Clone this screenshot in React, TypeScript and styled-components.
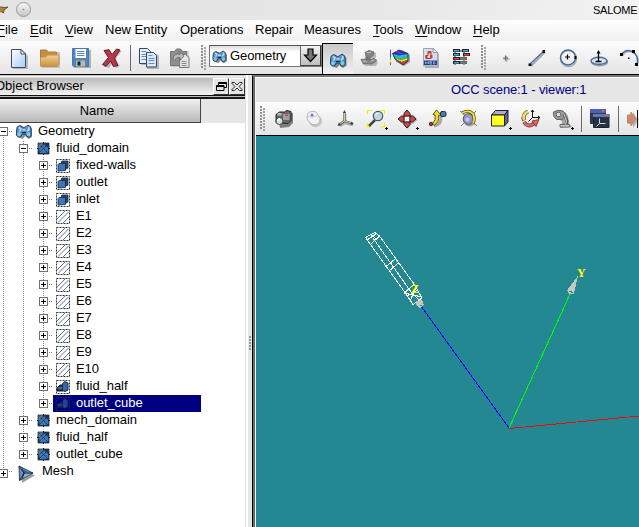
import React from "react";
import styled, { createGlobalStyle, css } from "styled-components";

const Global = createGlobalStyle`
  * { box-sizing: border-box; }
  body { margin: 0; overflow: hidden; }
`;

const Window = styled.div`
  width: 639px;
  height: 527px;
  display: flex;
  flex-direction: column;
  overflow: hidden;
  background: #e6e6e6;
  color: #000;
  font: 13px/17px "Liberation Sans", Arial, sans-serif;
  white-space: pre;
  cursor: default;
`;

const TitleBar = styled.div`
  height: 20px;
  flex: none;
  display: flex;
  align-items: center;
  justify-content: space-between;
  background: linear-gradient(100deg, #e4e4e4 0%, #e6e6e6 55%, #f3f3f3 100%);
`;

const Caption = styled.span`
  font-size: 11px;
  width: 46px;
  letter-spacing: -0.25px;
`;

const MenuBar = styled.div`
  height: 21px;
  flex: none;
  display: flex;
  align-items: center;
  background: linear-gradient(#fff, #f0f0f0);
`;

const MenuItem = styled.span<{ $w: number }>`
  flex: none;
  width: ${(p) => p.$w}px;
  padding-bottom: 2px;
  &:first-child { margin-left: -3px; }
  u { text-underline-offset: 2px; text-decoration-thickness: 1px; }
`;

const Toolbar = styled.div<{ $pad?: number }>`
  height: 33px;
  flex: none;
  display: flex;
  align-items: center;
  overflow: hidden;
  padding-left: ${(p) => p.$pad ?? 0}px;
  background: linear-gradient(#fdfdfd, #e4e4e4);
`;

const Slot = styled.div<{ $pressed?: boolean }>`
  width: 31px;
  height: 33px;
  flex: none;
  display: flex;
  align-items: center;
  justify-content: center;
  ${(p) =>
    p.$pressed &&
    css`
      height: 31px;
      margin-top: 2px;
      background: linear-gradient(#c9c9c9, #f2f2f2);
      border-left: 1px solid #000;
      border-top: 1px solid #000;
    `}
  svg { width: 24px; height: 24px; display: block; flex: none; overflow: visible; }
`;

const Separator = styled.div`
  flex: none;
  width: 1px;
  height: 26px;
  margin: 0 2px 0 3px;
  background: #6a6a6a;
`;

const Grip = styled.div<{ $l?: number; $r?: number }>`
  flex: none;
  width: 5px;
  height: 26px;
  margin: 0 ${(p) => p.$r ?? 4}px 0 ${(p) => p.$l ?? 5}px;
  background:
    repeating-linear-gradient(#8c8c8c 0 2px, transparent 2px 3px) 0 0 / 2px 24px no-repeat,
    repeating-linear-gradient(#a0a0a0 0 2px, transparent 2px 3px) 3px 2px / 2px 24px no-repeat;
`;

const Combo = styled.div`
  flex: none;
  width: 113px;
  height: 22px;
  margin-top: -3px;
  display: flex;
  align-items: center;
  border: 1px solid #777;
  border-top-color: #555;
  background: linear-gradient(#dcdcdc, #fff 6px);
  svg { width: 15px; height: 14px; margin: 1px 3px 0 2px; flex: none; }
  span { flex: 1; margin-top: -2px; letter-spacing: -0.1px; }
`;

const ComboArrow = styled.div`
  width: 21px;
  height: 20px;
  background: linear-gradient(#f4f4f4, #bdbdbd);
  border-left: 1px solid #666;
  border-right: 1px solid #333;
  border-bottom: 1px solid #444;
  && svg { width: 19px; height: 19px; margin: 0; display: block; }
`;

const Workspace = styled.div`
  flex: 1;
  min-height: 0;
  display: flex;
  border-top: 1px solid #000;
`;

const Dock = styled.div`
  width: 246px;
  flex: none;
  display: flex;
  flex-direction: column;
  border-right: 1px solid #e0e0e0;
  background: #fff;
`;

const DockTitle = styled.div`
  height: 21px;
  flex: none;
  display: flex;
  align-items: center;
  padding-top: 1px;
  border-top: 1px solid #c8c8c8;
  border-bottom: 1px solid #111;
  background: linear-gradient(#fff, #bcbcbc 14%, #f4f4f4);
  span { flex: 1; margin-left: -5px; margin-top: -1px; }
`;

const DockButton = styled.div`
  width: 16px;
  height: 17px;
  border: 1px solid #fff;
  border-right-color: #333;
  border-bottom-color: #333;
  background: #e4e4e4;
  svg { width: 14px; height: 15px; display: block; }
`;

const HeaderRow = styled.div`
  height: 27px;
  flex: none;
  display: flex;
  background: #e6e6e6;
  border-top: 1px solid #bbb;
  padding-top: 2px;
  box-shadow: inset 0 2px 0 #161616;
`;

const HeaderCell = styled.div`
  width: 201px;
  display: flex;
  align-items: center;
  justify-content: center;
  padding: 1px 6px 1px 0;
  border-right: 1px solid #444;
  border-bottom: 1px solid #444;
  background: linear-gradient(#f1f1f1, #b9b9b9);
`;

const Tree = styled.div`
  flex: 1;
  overflow: hidden;
`;

const Row = styled.div<{ $tall?: boolean }>`
  height: ${(p) => (p.$tall ? 21 : 17)}px;
  display: flex;
  margin-left: -7px;
`;

const dots = "repeating-linear-gradient(#858585 0 1px, transparent 1px 2px)";
const hdots = "repeating-linear-gradient(90deg, #858585 0 1px, transparent 1px 2px)";

const Guide = styled.div<{ $line: "full" | "half" | "below"; $odd: boolean; $branch?: boolean }>`
  width: 20px;
  flex: none;
  display: flex;
  align-items: center;
  padding-left: 6px;
  background-repeat: no-repeat;
  background-image: ${dots}, ${(p) => (p.$branch ? hdots : "none")};
  background-position: 10px ${(p) => (p.$line === "below" ? 8 : p.$odd ? 1 : 0)}px, 10px 8px;
  background-size: 1px ${(p) => (p.$line === "half" ? "9px" : "17px")}, 10px 1px;
`;

const Expander = styled.div<{ $open?: boolean }>`
  width: 9px;
  height: 9px;
  border: 1px solid #707070;
  background:
    linear-gradient(#000, #000) center / 5px 1px no-repeat,
    linear-gradient(#000, #000) center / 1px ${(p) => (p.$open ? 1 : 5)}px no-repeat,
    #fff;
`;

const Item = styled.div<{ $selected?: boolean; $pad: number; $gap: number; $lift: number }>`
  display: flex;
  align-items: center;
  padding-left: ${(p) => p.$pad}px;
  gap: ${(p) => p.$gap}px;
  letter-spacing: -0.06px;
  ${(p) => p.$selected && css`width: 148px; background: #000080; color: #fff;`}
  svg { flex: none; display: block; }
  span { margin-top: -${(p) => p.$lift}px; }
`;

const Splitter = styled.div`
  width: 6px;
  flex: none;
  display: flex;
  align-items: center;
  justify-content: flex-end;
  border-left: 2px solid #fff;
  padding: 85px 1px 0 0;
  background: #e6e6e6;
  &::before {
    content: "";
    width: 2px;
    height: 15px;
    background: repeating-linear-gradient(#999 0 2px, transparent 2px 3px);
  }
`;

const Viewer = styled.div`
  flex: 1;
  min-width: 0;
  display: flex;
  flex-direction: column;
  border-top: 2px solid #777;
  border-left: 1px solid #000;
  padding-left: 3px;
  background: linear-gradient(90deg, #6a6a6a 2px, #f4f4f4 2px);
`;

const ViewerTitle = styled.div`
  height: 25px;
  flex: none;
  border-top: 1px solid #fafafa;
  background: #e6e6e6;
  color: #000080;
  padding: 3px 0 0 195px;
  letter-spacing: -0.12px;
`;

const Scene = styled.div`
  flex: 1;
  border-top: 1px solid #000;
  background: #248892;
  overflow: hidden;
  svg { display: block; }
  text { font: bold 12px "Liberation Serif", serif; fill: #ff0; }
`;

const Ico = ({ children, s = 24 }: { children: React.ReactNode; s?: number }) => (
  <svg width={s} height={s} viewBox={`0 0 ${s} ${s}`}>{children}</svg>
);

const DocIcon = () => (
  <Ico>
    <path d="M6 5h10l5 5v13H6z" fill="#999" opacity=".6" />
    <path d="M4.500 3.500h9.500L18.500 8v13.500h-14z" fill="url(#paper)" stroke="#3c4a66" />
    <path d="M14 3.500V8h4.500z" fill="#fff" stroke="#3c4a66" />
  </Ico>
);

const FolderIcon = () => (
  <Ico>
    <path d="M4 6h18v16H4z" fill="#999" opacity=".5" />
    <path d="M2.500 4h6l2 2h8v14h-16z" fill="#c8903e" stroke="#a87b3c" />
    <path d="M2.500 20V11h5l2-2H21v9l-2 2.500z" fill="url(#gold)" stroke="#c3914c" />
  </Ico>
);

const FloppyIcon = () => (
  <Ico>
    <path d="M5 4h17v18H5z" fill="#888" opacity=".6" />
    <path d="M3.500 2.500h16v18h-15l-1-1z" fill="#5183bd" stroke="#4a78ab" />
    <path d="M6.500 3h10.500v9H6.500z" fill="#fff" />
    <path d="M8 5.500h7.500M8 7.500h7.500M8 9.500h7.500" stroke="#568ac4" />
    <path d="M7 14.500h9v6H7z" fill="#b7bdae" />
    <path d="M8.500 15.500h3v4h-3z" fill="#222" />
  </Ico>
);

const DeleteIcon = () => (
  <Ico>
    <path d="M7 6 L18 21 M20 4 L7 21" stroke="#888" strokeWidth="4" opacity=".5" />
    <path d="M4 4.500l5-.8 3 5 4.500-5.700 3.500 1-5.500 8 3.500 7.500-4.500 1-3-5.500-4.500 5.500-3.500-2 6-7z" fill="#b93746" stroke="#5a1c26" />
  </Ico>
);

const CopyIcon = () => (
  <Ico>
    <path d="M4 4h9v4h7l2 2v13H10v-4H4z" fill="#888" opacity=".5" />
    <path d="M2.500 2.500h8l3 3v12h-11z" fill="#e7effb" stroke="#334766" />
    <path d="M4.500 5.500h5M4.500 8.500h6M4.500 10.500h5M4.500 13.500h5" stroke="#6c8cc0" />
    <path d="M9.500 6.500h7l3 3v11.500h-10z" fill="#dce8fa" stroke="#334766" />
    <path d="M11.500 9.500h4M11.500 12.500h6M11.500 14.500h6M11.500 17.500h6" stroke="#6c8cc0" />
  </Ico>
);

const PasteIcon = () => (
  <Ico>
    <path d="M3 5h18v16H3z" fill="#aaa" opacity=".5" />
    <path d="M2.500 5.500h4l2-2.500h4l2 2.500h4v14h-16z" fill="#8f8f8f" stroke="#747474" />
    <path d="M11.500 8.500h6l3.500 3v10h-9.500z" fill="#e5e5e5" stroke="#777" />
    <path d="M5 13.500q1-7 7-5V5.500l4 4.500-4 4.500v-3q-4-1-5 3z" fill="#bdbdbd" stroke="#666" strokeWidth=".8" />
    <path d="M13.500 15.500h5M13.500 17.500h5M13.500 19.500h5" stroke="#888" />
  </Ico>
);

const GeometryShape = () => (
  <>
    <path d="M2 4l3-2.500 4 2.500 4.500-2.500L16.500 5v8l-4 2-3-3-3 3-4.500-2z" fill="#333" opacity=".55" />
    <path d="M1 3.500Q3.500 0 6 3q1.500 1 3.500 0 2.500-3.500 5 0l.7 3.500v5q-1.700 2.500-4 1.500L9.500 10H6.500L4.500 13q-2.500.5-4-1.500V7z" fill="#5b91c8" stroke="#24384f" strokeWidth=".9" />
    <path d="M3 3.500l2 1.500-1.500 2.500M12.500 3l.5 2.500-2 1.500M6.500 6h3" fill="none" stroke="#b9dcf8" strokeWidth="1.600" />
    <ellipse cx="3" cy="10.300" rx="1.800" ry="2" fill="#62d6ea" />
    <ellipse cx="12.500" cy="10.300" rx="1.800" ry="2" fill="#62d6ea" />
    <path d="M6 8.500h4" stroke="#1e3048" strokeWidth="1.200" />
  </>
);
const GeometrySmall = () => <svg width="16" height="16" viewBox="0 0 16 16"><GeometryShape /></svg>;
const GeometryIcon = () => <Ico><g transform="translate(4 6)"><GeometryShape /></g></Ico>;

const GrayMeshIcon = () => (
  <Ico>
    <path d="M5 18l4-3-1-6 5-3 6 1v4l-3 3 5 2-2 4H9z" fill="#888" opacity=".55" />
    <path d="M8 6.500l4-2 5 1.500-.5 3-3 2.500-4-.5z" fill="#858585" stroke="#666" strokeWidth=".8" />
    <path d="M8.500 11h5v3h-5z" fill="#777" />
    <path d="M4 13.500l5-.5 3 1.500 5-2 3 2-5 3.500-9-.5z" fill="#8a8a8a" stroke="#666" strokeWidth=".8" />
    <path d="M10 6.500h4M5.500 15l4 .5M14 15l3-1" stroke="#c4c4c4" />
  </Ico>
);

const SpectrumIcon = () => (
  <Ico>
    <path d="M6 8l8-4 8 5v7l-6 4-8-4z" fill="#555" opacity=".5" />
    <path d="M4.500 7.500L11 4l9 3.500V15l-5 4-8-6z" fill="#2733c0" />
    <path d="M5 8l6 1.500L20 8v2.500l-8 2L6 10z" fill="#21bfe0" />
    <path d="M6 10l6 2.500 8-2V12l-7.500 2.200L7 12z" fill="#35cc48" />
    <path d="M7 12l5.500 2.200L20 12v1.700L13.500 16 9 14z" fill="#f1e02c" />
    <path d="M9 14l4.500 2L20 13.700V15l-5 4z" fill="#cf4428" />
    <path d="M4.500 7.500L11 4l9 3.500V15l-5 4-8-6z" fill="none" stroke="#223" strokeWidth=".8" />
    <path d="M8 5.500l7 2.500" stroke="#8b3bd0" />
    <path d="M2.500 3.500v4" stroke="#e222a0" /><path d="M2.500 7v4" stroke="#33f" />
    <path d="M2.500 11v3" stroke="#2d4" /><path d="M2.500 14v3" stroke="#ee3" /><path d="M2.500 16.500v2.500" stroke="#e22" />
  </Ico>
);

const MedIcon = () => (
  <Ico>
    <path d="M6 4h10l4 4v14H6z" fill="#888" opacity=".6" />
    <path d="M4.500 2.500H14l4.500 4v13.500h-14z" fill="#d3deea" stroke="#98a5b8" />
    <path d="M14 2.500v4h4.500z" fill="#fff" stroke="#99a" />
    <path d="M9 5.500h3v7H7v-3h2z" fill="none" stroke="#a33" />
    <path d="M9 5h3v2.500H9zM6.500 9h2v3h-2zM11 9h2.500v3H11z" fill="#d33b2e" />
    <path d="M5 14.500h13v4.500H5z" fill="#223f83" />
    <path d="M6.500 18v-2.500l1.500 2 1.500-2V18M13 15.500h-2V18h2M11 16.700h2M14.500 15.500V18h1l1-1.200-1-1.300z" stroke="#a9c7f4" strokeWidth=".7" fill="none" />
  </Ico>
);

const BlocksIcon = () => (
  <Ico>
    <path d="M5 5v14M5 5h9M14 5v14" stroke="#777" strokeWidth="1.500" />
    {[[3, 3, "#39aee6"], [3, 7, "#39aee6"], [3, 11, "#e83e4b"], [3, 15, "#39aee6"], [12, 3, "#39aee6"], [13, 7, "#e83e4b"], [10, 11, "#777"], [10, 15, "#777"]].map(([x, y, c], i) => (
      <g key={i}>
        <rect x={Number(x)} y={Number(y)} width="7" height="3" fill={i > 5 ? "#666" : "#222"} />
        <rect x={Number(x) + 1} y={Number(y) + 1} width="5" height="1.500" fill={String(c)} />
      </g>
    ))}
  </Ico>
);

const PointIcon = () => (
  <Ico>
    <path d="M12.500 10v6M9.500 13h6" stroke="#aaa" strokeWidth="1.500" />
    <path d="M11.500 9.500v5M9 12h5" stroke="#54708f" />
  </Ico>
);

const LineIcon = () => (
  <Ico>
    <path d="M6 20L20 6" stroke="#aaa" strokeWidth="2" />
    <path d="M5 18L19 5" stroke="#3f6c9e" strokeWidth="1.200" />
    <path d="M3.500 17.500h3v2.500h-3zM17.500 4h2.500v3h-2.500z" fill="#111" />
  </Ico>
);

const CircleIcon = () => (
  <Ico>
    <circle cx="12.500" cy="12.500" r="8" fill="none" stroke="#aaa" strokeWidth="1.500" />
    <circle cx="12" cy="11.500" r="7.500" fill="none" stroke="#3f6c9e" strokeWidth="1.400" />
    <path d="M11.500 8.500v5M9 11h5" stroke="#000" strokeWidth="1.200" />
    <path d="M18.500 10h2v3h-2z" />
  </Ico>
);

const ExtrudeIcon = () => (
  <Ico>
    <ellipse cx="12.500" cy="16" rx="8" ry="3.700" fill="none" stroke="#999" strokeWidth="1.500" />
    <ellipse cx="12" cy="14.800" rx="8" ry="3.500" fill="#dce2e8" stroke="#3f6c9e" strokeWidth="1.400" />
    <path d="M11.500 15V6M8.500 15.500h6" stroke="#000" strokeWidth="1.300" />
    <path d="M9.500 7.500l2-3.500 2 3.500z" />
  </Ico>
);

const ArcIcon = () => (
  <Ico>
    <path d="M4 10q5-7 12-3 6 5 3 12" stroke="#aaa" fill="none" strokeWidth="1.500" />
    <path d="M3 9q5-7 12-3 6 4 4 12" stroke="#3f6c9e" fill="none" strokeWidth="1.500" />
    <path d="M2 7h3v3H2zM14 4h3v3h-3zM17 17h3v3h-3z" />
    <path d="M10 11.500h1.500V13H10z" />
  </Ico>
);

const CameraIcon = () => (
  <Ico>
    <path d="M6 9l6-4 9 1v10l-4 4-9 1z" fill="#333" opacity=".6" />
    <path d="M4 7.500l3.500-2.500h5l2-1.500 4.500 1v9l-3 3-12-1z" fill="#64686a" stroke="#222" />
    <path d="M11 7h6.500v6H11z" fill="#9ba1a3" /><path d="M13 7.500h3V9h-3z" fill="#d63e35" />
    <path d="M5.500 6h4v2.500h-4z" fill="#b8bcbe" />
    <circle cx="7.500" cy="14" r="3.500" fill="#cfdfe4" stroke="#444" />
    <path d="M6 14a2 2 0 0 1 2-2" stroke="#fff" strokeWidth="1.500" fill="none" />
  </Ico>
);

const MouseIcon = () => (
  <Ico>
    <ellipse cx="12.500" cy="14" rx="6.500" ry="6" fill="#999" opacity=".5" />
    <path d="M4 9q.5-4.500 5.500-4.500 4-.5 5.500 3.500 3.500 3.500 1.500 7.500-2.500 3-7 2-5.500-2.500-5.500-8.500z" fill="#f2f2f2" stroke="#b5b5b5" />
    <path d="M4.500 9.500q5 1.500 9.500-1" stroke="#ccc" fill="none" />
    <circle cx="9" cy="8" r="1.500" fill="#7178c0" />
  </Ico>
);

const AxesIcon = () => (
  <Ico>
    <path d="M11 7v9l8 2M11 16l-5 3" stroke="#888" strokeWidth="2.500" fill="none" opacity=".6" />
    <path d="M10.500 5v9l8 2.500M10.500 14L5 18" stroke="#5d5d4e" strokeWidth="2.200" fill="none" />
    <path d="M10.500 6v8l7 2M10.500 14L6 17" stroke="#cfcfac" strokeWidth="1" fill="none" />
    <path d="M9 6l1.500-3L12 6zM17 14.500l3 2.500-3.500 1zM5 15.500L3.500 19l3.500-1z" fill="#44443a" />
  </Ico>
);

const MenuMark = () => <path d="M20 21.500h3M21.500 20v3" stroke="#000" />;

const ZoomIcon = () => (
  <Ico>
    <path d="M2.500 7V3.500h4M15.500 3.500h4V7M2.500 16v4h4M15.500 20h4v-4" stroke="#f7ed00" strokeWidth="1.200" fill="none" />
    <path d="M10 13l-6 6" stroke="#444" strokeWidth="2.500" />
    <circle cx="13" cy="9" r="4.700" fill="#b7dae2" stroke="#555" strokeWidth="1.200" />
    <path d="M10.500 8q1-2 3-2" stroke="#fff" fill="none" />
    <MenuMark />
  </Ico>
);

const PanIcon = () => (
  <Ico>
    <path d="M12 5l3 3h3l4 5-4 3-3 2-3 4-4-4-4-3z" fill="#777" opacity=".4" />
    <g fill="#c84a50" stroke="#34191b">
      <path d="M11 3l3 3.500V9H8V6.500zM11 21l3-3.500V15H8v2.500zM2 12l3.500-3H8v6H5.500zM20 12l-3.500-3H14v6h2.500z" />
    </g>
    <path d="M9 10h4v4H9z" fill="#f4f4f4" />
    <MenuMark />
  </Ico>
);

const PanGlobalIcon = () => (
  <Ico>
    <path d="M7 19q8-1 7-10" stroke="#555" strokeWidth="3" fill="none" opacity=".45" />
    <path d="M6 7.500L9.500 3l4.500 5-2.500.5q1.500 6-4.500 10L5.500 17q4-4 2.500-9z" fill="#f0db2a" stroke="#5b5314" />
    <rect x="13.500" y="4.500" width="5.500" height="5" rx="1.500" fill="#4c79af" stroke="#234" />
    <circle cx="4" cy="17" r="1.700" fill="#c53232" stroke="#422" />
  </Ico>
);

const RotatePointIcon = () => (
  <Ico>
    <path d="M2 4l17 15M18 4L3 19" stroke="#777" strokeWidth="1" />
    <circle cx="11.500" cy="13.500" r="6" fill="#555" opacity=".5" />
    <circle cx="10.500" cy="12" r="5.300" fill="#9496d0" stroke="#556" />
    <circle cx="9.500" cy="12.500" r="2" fill="#c9caf2" />
    <path d="M4 6q8-4 11.500 2 1.500 4-.5 8" stroke="#59500e" strokeWidth="3.200" fill="none" />
    <path d="M4 6q8-4 11.500 2 1.500 4-.5 8" stroke="#f3e22f" strokeWidth="1.800" fill="none" />
  </Ico>
);

const CubeIcon = () => (
  <Ico>
    <path d="M2.500 8l4-4.500H19L15.500 8z" fill="#aaaad5" stroke="#222" />
    <path d="M15.500 8L19 3.500V15l-3.500 4z" fill="#66668d" stroke="#222" />
    <path d="M2.500 8h13v11h-13z" fill="#ffff22" stroke="#222" />
    <MenuMark />
  </Ico>
);

const RotationIcon = () => (
  <Ico>
    <path d="M8 4.500q-6 3-4 9" stroke="#5c5310" strokeWidth="4" fill="none" />
    <path d="M8 4.500q-6 3-4 8.500" stroke="#eadb78" strokeWidth="2.600" fill="none" />
    <path d="M4 15q4 6 10 1.500" stroke="#591f1f" strokeWidth="4" fill="none" />
    <path d="M4 15q4 6 10 1.500" stroke="#df6567" strokeWidth="2.800" fill="none" />
    <path d="M12 14l7-1.500-3 7z" fill="#df6567" stroke="#591f1f" strokeWidth=".7" />
    <path d="M12.500 10.500V3M12.500 10.500h7M12.500 10.500l-4 4M11 5l1.500-2L14 5M18 9l2 1.500-2 1.500" stroke="#111" fill="none" />
  </Ico>
);

const ResetIcon = () => (
  <Ico>
    <path d="M5 5h9l3 4 1 7 3 4-11 1 1-7-5-2z" fill="#777" opacity=".6" />
    <path d="M2.500 5q4-3 9.500-1l2.500 3-3 5.500H6Q1.500 10 2.500 5z" fill="#999" stroke="#666" />
    <circle cx="7.500" cy="7.500" r="2.300" fill="#ddd" stroke="#666" />
    <path d="M13 7l3 7-1 4-6 1" stroke="#555" strokeWidth="3" fill="none" />
    <path d="M9 17.500h9l1 2.500H9z" fill="#ccc" stroke="#555" strokeWidth=".8" />
    <path d="M13 7l2.500 7-1 3.500" stroke="#ddd" fill="none" />
    <MenuMark />
  </Ico>
);

const WindowsIcon = () => (
  <Ico>
    <path d="M2.500 2.500h15v14h-15z" fill="#333b50" stroke="#222c50" />
    <path d="M2 2h16v4H2z" fill="#4864b3" /><path d="M14 3h2v2h-2z" fill="#e45b67" />
    <path d="M5.500 7.500h15.500v13H5.500z" fill="#29333f" stroke="#1c2434" />
    <path d="M5 7h16.500v3H5z" fill="#5f78be" /><path d="M18 7.500h2v2h-2z" fill="#e45b67" />
    <path d="M11.500 11.500v5h6M11.500 16.500l-3 3" stroke="#b8dfed" fill="none" />
  </Ico>
);

const ClipIcon = () => (
  <Ico>
    <path d="M4 8h4V5l5 8-5 8v-4H4z" fill="#777" opacity=".5" />
    <path d="M2.500 8h3.500V5l4.500 7-4.500 7v-3H2.500z" fill="#d5866f" stroke="#b98672" />
    <path d="M12.500 3v18" stroke="#111" />
    <path d="M13.500 12h4" stroke="#ef9856" />
  </Ico>
);

const BoxIcon = () => (
  <svg width="13" height="13" viewBox="0 0 13 13">
    <path d="M1 1h11v11H1z" fill="#1d3853" />
    <path d="M1 1h6L1 8z" fill="#5d7c9c" />
    <path d="M2 7l5-4.500L11.500 6v4L7 11.500 3 11z" fill="#3b76b8" />
    <path d="M2.500 2.500l8 8M10.500 2.500l-8 8" stroke="#132436" strokeWidth=".9" strokeDasharray="1.400 .8" />
    <path d="M1 1h11v11H1z" fill="none" stroke="#1a2c3f" strokeWidth=".8" />
    <path d="M6.500 0v1.500M6.500 11.500V13M0 6.500h1.500M11.500 6.500H13" stroke="#111" />
  </svg>
);

const Frame = () => <rect x=".5" y=".5" width="13" height="13" fill="none" stroke="#333" strokeDasharray="2 1" />;

const FaceIcon = () => (
  <svg width="14" height="14" viewBox="0 0 14 14">
    <Frame />
    <path d="M5 3l1-1h6v7l-2 1z" fill="#234a73" stroke="#112539" strokeWidth=".8" />
    <path d="M2 5.500l1-1h6.500v7L3 12H2z" fill="#3d77b8" stroke="#112539" strokeWidth=".8" />
  </svg>
);

const EdgeIcon = () => (
  <svg width="14" height="14" viewBox="0 0 14 14">
    <Frame />
    <path d="M1 9L9 1M2 12.500L12.500 2M7 13l6-6" stroke="#45688f" strokeWidth=".9" />
  </svg>
);

const SolidIcon = ({ dim }: { dim?: boolean }) => (
  <svg width="14" height="14" viewBox="0 0 14 14" opacity={dim ? 0.65 : 1}>
    <Frame />
    <path d="M1 8l3-3h3v6H1z" fill="#1e3c5c" stroke="#0d1826" />
    <path d="M6.500 4l2-2.500L12 3v7l-3 1.500-2.500-1z" fill="#346aa6" stroke="#132a44" />
    <path d="M1.500 8h5" stroke="#5f86ae" />
  </svg>
);

const MeshIcon = () => (
  <svg width="17" height="18" viewBox="0 0 17 18">
    <path d="M3 3l14 7.500L4 18z" fill="#777" opacity=".7" />
    <path d="M1 1l14 7L1.500 15.500z" fill="#6b93c0" stroke="#162334" strokeWidth=".8" />
    <path d="M1 1l5 7-4.500 7.500M6 8h9M4 3.500l2 4.500-1.500 5" stroke="#162334" fill="none" strokeWidth=".9" />
    <path d="M4 4l7 3.500H7z" fill="#3c5f88" />
    <path d="M7 9h6l-8 4z" fill="#8fb3dc" />
  </svg>
);

type Kind = "geometry" | "box" | "face" | "edge" | "solid" | "mesh";
interface Node { label: string; level: number; kind: Kind; open?: boolean; selected?: boolean; last?: boolean }

const icons: Record<Kind, React.FC> = {
  geometry: GeometrySmall, box: BoxIcon, face: FaceIcon, edge: EdgeIcon, solid: SolidIcon, mesh: MeshIcon,
};

const nodes: Node[] = [
  { label: "Geometry", level: 0, kind: "geometry", open: true },
  { label: "fluid_domain", level: 1, kind: "box", open: true },
  ...["fixed-walls", "outlet", "inlet"].map((label): Node => ({ label, level: 2, kind: "face" })),
  ...Array.from({ length: 10 }, (_, i): Node => ({ label: `E${i + 1}`, level: 2, kind: "edge" })),
  { label: "fluid_half", level: 2, kind: "solid" },
  { label: "outlet_cube", level: 2, kind: "solid", selected: true, last: true },
  { label: "mech_domain", level: 1, kind: "box" },
  { label: "fluid_half", level: 1, kind: "box" },
  { label: "outlet_cube", level: 1, kind: "box", last: true },
  { label: "Mesh", level: 0, kind: "mesh", last: true },
];

const itemPad = [3, 4, 3];

const TreeRow = ({ node, index }: { node: Node; index: number }) => {
  const Icon = icons[node.kind];
  const mesh = node.kind === "mesh";
  return (
    <Row $tall={mesh}>
      {Array.from({ length: node.level + 1 }, (_, l) => {
        const own = l === node.level;
        const line = own ? (node.last ? "half" : index === 0 ? "below" : "full") : "full";
        return (
          <Guide key={l} $line={line} $odd={index % 2 === 1} $branch={own}>
            {own && <Expander $open={node.open} />}
          </Guide>
        );
      })}
      <Item $selected={node.selected} $pad={mesh ? 5 : itemPad[node.level]} $gap={mesh ? 7 : 6} $lift={mesh ? 6 : 2}>
        {node.kind === "solid" ? <SolidIcon dim={node.selected} /> : <Icon />}
        <span>{node.label}</span>
      </Item>
    </Row>
  );
};

const menus: [string, number, boolean][] = [
  ["File", 33, true], ["Edit", 35, true], ["View", 40, true], ["New Entity", 75, false], ["Operations", 75, false],
  ["Repair", 49, false], ["Measures", 69, false], ["Tools", 42, true], ["Window", 58, true], ["Help", 40, true],
];

const Tools = ({ items }: { items: React.FC[] }) => (
  <>{items.map((Icon, i) => <Slot key={i}><Icon /></Slot>)}</>
);

export default function App() {
  return (
    <Window>
      <Global />
      <TitleBar>
        <svg width="36" height="20" viewBox="0 0 36 20">
          <path d="M0 7l5 .5L8 7 4 10l-.5 3L1 11.500l-1 1" fill="#ad842f" stroke="#6d5526" />
          <circle cx="23.500" cy="9.500" r="7" fill="url(#knob)" stroke="#999" />
          <circle cx="23.500" cy="9.500" r=".8" fill="#777" />
          <defs>
            <linearGradient id="knob" x2="0" y2="1"><stop stopColor="#fafafa" /><stop offset="1" stopColor="#c2c2c2" /></linearGradient>
            <linearGradient id="paper" x2="1" y2="1"><stop stopColor="#fff" /><stop offset="1" stopColor="#a9cbfa" /></linearGradient>
            <linearGradient id="gold" x2="0" y2="1"><stop stopColor="#f4d193" /><stop offset="1" stopColor="#cb903d" /></linearGradient>
          </defs>
        </svg>
        <Caption>SALOME</Caption>
      </TitleBar>
      <MenuBar>
        {menus.map(([name, w, key]) => (
          <MenuItem key={name} $w={w}>{key ? <><u>{name[0]}</u>{name.slice(1)}</> : name}</MenuItem>
        ))}
      </MenuBar>
      <Toolbar $pad={3}>
        <Tools items={[DocIcon, FolderIcon, FloppyIcon, DeleteIcon]} />
        <Separator />
        <Tools items={[CopyIcon, PasteIcon]} />
        <Grip $l={6} $r={3} />
        <Combo>
          <GeometrySmall />
          <span>Geometry</span>
          <ComboArrow>
            <svg viewBox="0 0 19 19"><path d="M7 3h5v6h3.500l-6 6.500-6-6.500H7z" fill="#777" stroke="#000" strokeWidth="1.200" /></svg>
          </ComboArrow>
        </Combo>
        <Slot $pressed><GeometryIcon /></Slot>
        <Tools items={[GrayMeshIcon, SpectrumIcon, MedIcon, BlocksIcon]} />
        <Grip $l={4} $r={4} />
        <Tools items={[PointIcon, LineIcon, CircleIcon, ExtrudeIcon, ArcIcon]} />
      </Toolbar>
      <Workspace>
        <Dock>
          <DockTitle>
            <span>Object Browser</span>
            <DockButton>
              <svg viewBox="0 0 14 15"><path d="M4.500 6V3.500h8v5H10M4.500 4.500h8M2.500 6.500H10v5H2.500zM2.500 7.500H10" fill="none" stroke="#000" /></svg>
            </DockButton>
            <DockButton>
              <svg viewBox="0 0 14 15"><path d="M2 3.500h2.500L7 6l2.500-2.500H12v1L9 7.500l3 3v1H9.500L7 9l-2.500 2.500H2v-1l3-3-3-3z" fill="#eee" stroke="#111" strokeWidth=".9" /></svg>
            </DockButton>
          </DockTitle>
          <HeaderRow><HeaderCell>Name</HeaderCell></HeaderRow>
          <Tree>{nodes.map((n, i) => <TreeRow key={i} node={n} index={i} />)}</Tree>
        </Dock>
        <Splitter />
        <Viewer>
          <ViewerTitle>OCC scene:1 - viewer:1</ViewerTitle>
          <Toolbar $pad={0}>
            <Grip $l={4} $r={3} />
            <Tools items={[CameraIcon, MouseIcon, AxesIcon, ZoomIcon, PanIcon, PanGlobalIcon, RotatePointIcon, CubeIcon, RotationIcon, ResetIcon]} />
            <Separator />
            <Tools items={[WindowsIcon]} />
            <Separator />
            <Tools items={[ClipIcon]} />
          </Toolbar>
          <Scene>
            <svg width="383" height="391" viewBox="256 136 383 391" shapeRendering="crispEdges" fill="none">
              <path d="M509 428.500L639 416" stroke="#f00" />
              <path d="M509 428L571 292" stroke="#0f0" />
              <path d="M509 428L421 306" stroke="#00f" />
              <path d="M578 275.500L567 290.500L569 293.500H574z" fill="#c3c8bd" />
              <path d="M569 291h2v1h2" stroke="#248892" />
              <g stroke="#fff">
                <path d="M365.500 237.500L375 232.500L379.500 236L370.500 244.500zM365.500 237.500L405 292.500L413 304.500M379.500 236L414 284L422 298M373 238L411 292" />
                <path d="M367 240L376 234M371 234.500L377 240" />
                <path d="M385.500 267L395 259M389 271L398.500 263" />
                <path d="M405 292.500L414 284M407 296L418 290M413 304.500L422 298M404 293L422 297M409 290L420 301M410 301L416 288" />
              </g>
              <path d="M416 301l6-1 2 5-4 3-4-3z" fill="#c3c8bd" />
              <path d="M420 305h1v1" stroke="#248892" />
              <text x="411" y="293">Z</text>
              <text x="577" y="277">Y</text>
            </svg>
          </Scene>
        </Viewer>
      </Workspace>
    </Window>
  );
}
